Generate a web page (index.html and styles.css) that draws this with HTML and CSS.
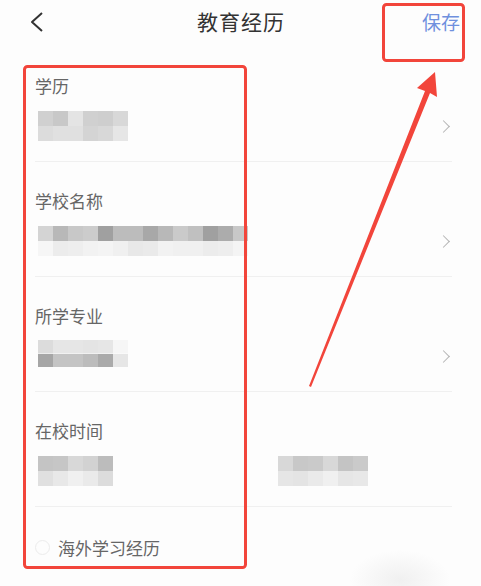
FILE: index.html
```html
<!DOCTYPE html>
<html lang="zh-CN">
  <head>
    <meta charset="UTF-8" />
    <title>教育经历</title>
    <link rel="stylesheet" href="styles.css">
  </head>
  <body>
    <div class="page">
      <div class="header">
        <div class="back">
          <svg width="16" height="22" viewBox="0 0 16 22">
            <path d="M13 2 L3 11 L13 20" fill="none" stroke="#333" stroke-width="2" stroke-linejoin="round" />
          </svg>
        </div>
        <div class="title">教育经历</div>
        <div class="save">保存</div>
      </div>

      <div class="list">
        <div class="row">
          <div class="label">学历</div>
          <div class="value">
            <div class="mosaic m1"></div>
            <span class="arrow"></span>
          </div>
        </div>
        <div class="row">
          <div class="label">学校名称</div>
          <div class="value">
            <div class="mosaic m2"></div>
            <span class="arrow"></span>
          </div>
        </div>
        <div class="row">
          <div class="label">所学专业</div>
          <div class="value">
            <div class="mosaic m3"></div>
            <span class="arrow"></span>
          </div>
        </div>
        <div class="row">
          <div class="label">在校时间</div>
          <div class="value dates">
            <div class="mosaic m4a"></div>
            <div class="mosaic m4b"></div>
          </div>
        </div>
        <div class="abroad">
          <span class="radio"></span>
          <span>海外学习经历</span>
        </div>
      </div>

      <div class="fab-shadow"></div>

      <!-- annotation layer -->
      <svg class="marks" width="481" height="586" viewBox="0 0 481 586">
        <rect x="24.5" y="66.5" width="221" height="501" rx="3" fill="none" stroke="#f2453b" stroke-width="3" />
        <rect x="383.5" y="4.5" width="80" height="56" rx="3" fill="none" stroke="#f2453b" stroke-width="3" />
        <polygon points="309,386 425,91 417,88 435,72 437,97 430,93 311,387" fill="#f2453b" />
      </svg>
    </div>
  </body>
</html>
```

FILE: styles.css
```css
body {
  margin: 0;
  background: #fdfdfd;
  font-family: "Noto Sans CJK SC", "Noto Sans", sans-serif;
}
.page {
  position: relative;
  width: 481px;
  height: 586px;
  overflow: hidden;
}
.header {
  display: grid;
  grid-template-columns: 1fr auto 1fr;
  align-items: center;
  height: 42px;
}
.back {
  padding-left: 29px;
  display: flex;
  align-items: center;
  padding-top: 1px;
}
.title {
  font-size: 21px;
  color: #333;
  letter-spacing: 1px;
  padding-left: 1px;
}
.save {
  justify-self: end;
  padding-right: 21px;
  font-size: 19px;
  color: #6f90de;
}
.list {
  margin-top: 5px;
  padding-left: 35px;
  padding-right: 29px;
}
.row {
  padding: 28px 0 20px;
  border-bottom: 1px solid #f0f0f0;
}
.label {
  font-size: 17px;
  line-height: 22px;
  color: #666;
}
.value {
  margin-top: 14px;
  height: 30px;
  display: flex;
  align-items: center;
  justify-content: space-between;
}
.dates {
  justify-content: flex-start;
  gap: 162px;
}
.arrow {
  width: 8px;
  height: 8px;
  border-top: 1.5px solid #b4b4b4;
  border-right: 1.5px solid #b4b4b4;
  transform: rotate(45deg);
  margin-right: 4px;
}
.mosaic {
  height: 30px;
  margin-left: 3px;
  background-repeat: no-repeat;
  background-size: 100% 50%;
  background-position: top, bottom;
}
.m1 {
  width: 90px;
  background-image:
    linear-gradient(to right, #d0d0d0 0 15px, #c8c8c8 15px 30px, #e4e4e4 30px 45px, #d0d0d0 45px 60px, #cecece 60px 75px, #d8d8d8 75px 90px),
    linear-gradient(to right, #dcdcdc 0 15px, #e0e0e0 15px 30px, #e0e0e0 30px 45px, #d4d4d4 45px 60px, #d8d8d8 60px 75px, #e6e6e6 75px 90px);
}
.m2 {
  width: 210px;
  background-image:
    linear-gradient(to right, #d4d4d4 0 15px, #b8b8b8 15px 30px, #c8c8c8 30px 45px, #cccccc 45px 60px, #a0a0a0 60px 75px, #bcbcbc 75px 90px, #bcbcbc 90px 105px, #a8a8a8 105px 120px, #b8b8b8 120px 135px, #cacaca 135px 150px, #c0c0c0 150px 165px, #a0a0a0 165px 180px, #acacac 180px 195px, #c8c8c8 195px 210px),
    linear-gradient(to right, #f6f6f6 0 15px, #ececec 15px 30px, #eeeeee 30px 45px, #f2f2f2 45px 60px, #f4f4f4 60px 75px, #f0f0f0 75px 90px, #e8e8e8 90px 105px, #eaeaea 105px 120px, #f2f2f2 120px 135px, #f0f0f0 135px 150px, #f0f0f0 150px 165px, #ececec 165px 180px, #eeeeee 180px 195px, #f4f4f4 195px 210px);
}
.m3 {
  width: 90px;
  height: 27px;
  margin-top: -5px;
  background-image:
    linear-gradient(to right, #dcdcdc 0 15px, #e6e6e6 15px 30px, #e6e6e6 30px 45px, #e4e4e4 45px 60px, #e6e6e6 60px 75px, #f6f6f6 75px 90px),
    linear-gradient(to right, #a6a6a6 0 15px, #c4c4c4 15px 30px, #c4c4c4 30px 45px, #bcbcbc 45px 60px, #aaaaaa 60px 75px, #e6e6e6 75px 90px);
}
.m4a {
  width: 75px;
  background-image:
    linear-gradient(to right, #c4c4c4 0 15px, #c6c6c6 15px 30px, #d8d8d8 30px 45px, #d2d2d2 45px 60px, #bcbcbc 60px 75px),
    linear-gradient(to right, #e0e0e0 0 15px, #e8e8e8 15px 30px, #f0f0f0 30px 45px, #eaeaea 45px 60px, #dcdcdc 60px 75px);
}
.m4b {
  width: 90px;
  background-image:
    linear-gradient(to right, #d8d8d8 0 15px, #c8c8c8 15px 30px, #cacaca 30px 45px, #d8d8d8 45px 60px, #c4c4c4 60px 75px, #cacaca 75px 90px),
    linear-gradient(to right, #e6e6e6 0 15px, #e4e4e4 15px 30px, #eaeaea 30px 45px, #f0f0f0 45px 60px, #e6e6e6 60px 75px, #e8e8e8 75px 90px);
}
.abroad {
  display: flex;
  align-items: center;
  gap: 8px;
  margin-top: 28px;
  font-size: 17px;
  color: #666;
}
.radio {
  width: 13px;
  height: 13px;
  border: 1px solid #ececec;
  border-radius: 50%;
}
.fab-shadow {
  position: absolute;
  left: 350px;
  top: 550px;
  width: 100px;
  height: 60px;
  border-radius: 50%;
  background: radial-gradient(closest-side, #f0f0f0, rgba(253, 253, 253, 0));
}
.marks {
  position: absolute;
  left: 0;
  top: 0;
  pointer-events: none;
}
```
